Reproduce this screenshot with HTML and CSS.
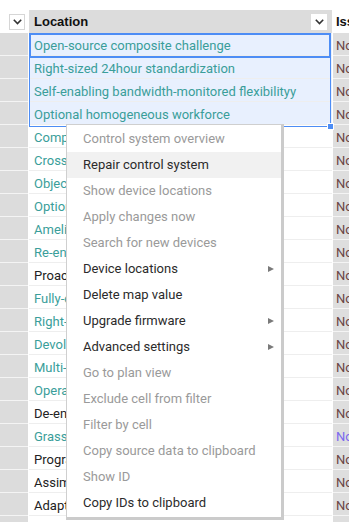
FILE: index.html
```html
<html>
<head>
<link rel="stylesheet" href="styles.css">
</head>
<body>
<div class="sheet">
    <!-- header row -->
    <div class="row head">
        <div class="rowhead">
            <span class="drop"><svg width="9" height="6" viewBox="0 0 9 6"><polyline points="0.8,0.8 4.5,4.6 8.2,0.8" fill="none" stroke="#333" stroke-width="1.6"/></svg></span>
        </div>
        <div class="cell loc">Location
            <span class="drop flat"><svg width="9" height="6" viewBox="0 0 9 6"><polyline points="0.8,0.8 4.5,4.6 8.2,0.8" fill="none" stroke="#333" stroke-width="1.6"/></svg></span>
        </div>
        <div class="cell iss">Issues</div>
    </div>

    <div class="row sel"><div class="rowhead"></div><div class="cell loc teal">Open-source composite challenge</div><div class="cell iss">No</div></div>
    <div class="row sel"><div class="rowhead"></div><div class="cell loc teal">Right-sized 24hour standardization</div><div class="cell iss">No</div></div>
    <div class="row sel"><div class="rowhead"></div><div class="cell loc teal">Self-enabling bandwidth-monitored flexibilityy</div><div class="cell iss">No</div></div>
    <div class="row sel"><div class="rowhead"></div><div class="cell loc teal">Optional homogeneous workforce</div><div class="cell iss">No</div></div>
    <div class="row"><div class="rowhead"></div><div class="cell loc teal">Compatible stable hierarchy</div><div class="cell iss">No</div></div>
    <div class="row"><div class="rowhead"></div><div class="cell loc teal">Cross-platform systemic model</div><div class="cell iss">No</div></div>
    <div class="row"><div class="rowhead"></div><div class="cell loc teal">Object-based local groupware</div><div class="cell iss">No</div></div>
    <div class="row"><div class="rowhead"></div><div class="cell loc teal">Optional zero defect matrix</div><div class="cell iss">No</div></div>
    <div class="row"><div class="rowhead"></div><div class="cell loc teal">Ameliorated fresh-thinking hub</div><div class="cell iss">No</div></div>
    <div class="row"><div class="rowhead"></div><div class="cell loc teal">Re-engineered radical access</div><div class="cell iss">No</div></div>
    <div class="row"><div class="rowhead"></div><div class="cell loc">Proactive asynchronous circuit</div><div class="cell iss">No</div></div>
    <div class="row"><div class="rowhead"></div><div class="cell loc teal">Fully-configurable web-enabled core</div><div class="cell iss">No</div></div>
    <div class="row"><div class="rowhead"></div><div class="cell loc teal">Right-sized mobile adapter</div><div class="cell iss">No</div></div>
    <div class="row"><div class="rowhead"></div><div class="cell loc teal">Devolved neutral database</div><div class="cell iss">No</div></div>
    <div class="row"><div class="rowhead"></div><div class="cell loc teal">Multi-tiered intangible capacity</div><div class="cell iss">No</div></div>
    <div class="row"><div class="rowhead"></div><div class="cell loc teal">Operative optimal alliance</div><div class="cell iss">No</div></div>
    <div class="row"><div class="rowhead"></div><div class="cell loc">De-engineered tertiary interface</div><div class="cell iss">No</div></div>
    <div class="row"><div class="rowhead"></div><div class="cell loc teal">Grass-roots bifurcated project</div><div class="cell iss purple">No</div></div>
    <div class="row"><div class="rowhead"></div><div class="cell loc">Programmable logistical protocol</div><div class="cell iss">No</div></div>
    <div class="row"><div class="rowhead"></div><div class="cell loc">Assimilated modular paradigm</div><div class="cell iss">No</div></div>
    <div class="row"><div class="rowhead"></div><div class="cell loc">Adaptive discrete application</div><div class="cell iss">No</div></div>
    <div class="row"><div class="rowhead"></div><div class="cell loc"></div><div class="cell iss"></div></div>

    <!-- selected range -->
    <div class="range"><div class="active"></div><span class="handle"></span></div>

    <!-- context menu -->
    <ul class="menu">
        <li class="off">Control system overview</li>
        <li class="hover">Repair control system</li>
        <li class="off">Show device locations</li>
        <li class="off">Apply changes now</li>
        <li class="off">Search for new devices</li>
        <li class="sub">Device locations</li>
        <li>Delete map value</li>
        <li class="sub">Upgrade firmware</li>
        <li class="sub">Advanced settings</li>
        <li class="off">Go to plan view</li>
        <li class="off">Exclude cell from filter</li>
        <li class="off">Filter by cell</li>
        <li class="off">Copy source data to clipboard</li>
        <li class="off">Show ID</li>
        <li>Copy IDs to clipboard</li>
    </ul>
</div>
</body>
</html>
```

FILE: styles.css
```css
* {
    margin: 0;
    padding: 0;
    box-sizing: border-box;
}

html, body {
    background: white;
    overflow: hidden;
}

.sheet {
    position: relative;
    padding-top: 10px;
    width: 349px;
    font: 13px Roboto, "Liberation Sans", sans-serif;
}

.row {
    display: flex;
    height: 23px;
}

.rowhead {
    width: 28px;
    flex: none;
    background: #dcdcdc;
    border-bottom: 1px solid #f4f4f4;
    margin-right: 1px;
}

.cell {
    height: 23px;
    line-height: 21px;
    padding: 2px 0 0 5px;
    white-space: nowrap;
    overflow: hidden;
    border-bottom: 1px solid #eeeeee;
}

.cell.loc {
    width: 303px;
    flex: none;
    color: #222;
    margin-right: 1px;
}

.cell.iss {
    flex: 1;
    padding-left: 3px;
    background: #dedede;
    color: #6b4545;
    border-bottom-color: #f4f4f4;
}

.teal { color: #3a9e9a !important; }
.purple { color: #7b68ee !important; }

.row.sel .cell.loc { background: #e8f0fe; }

/* header */
.head .rowhead {
    background: white;
    border: none;
    position: relative;
}
.head .cell {
    font: bold 13px "Liberation Sans", Arial, sans-serif;
    color: #111;
    border: none;
    padding-top: 0;
    line-height: 23px;
}
.head .cell.loc {
    background: #dcdcdc;
    position: relative;
}
.head .cell.iss { background: white; }

.drop {
    position: absolute;
    top: 4px;
    left: 9px;
    width: 16px;
    height: 16px;
    background: white;
    border: 1px solid #d6d6d6;
    display: flex;
    align-items: center;
    justify-content: center;
}
.drop.flat {
    left: auto;
    right: 5px;
    border-color: white;
}

/* selection */
.range {
    position: absolute;
    left: 29px;
    top: 33px;
    width: 302px;
    height: 94px;
    border: 1px solid #4d8df5;
}
.range .active {
    position: absolute;
    left: -1px;
    top: -1px;
    right: -1px;
    height: 25px;
    border: 2px solid #4d8df5;
}
.range .handle {
    position: absolute;
    right: -4px;
    bottom: -4px;
    width: 7px;
    height: 7px;
    background: #4d8df5;
    border: 1px solid white;
}

/* context menu */
.menu {
    position: absolute;
    left: 66px;
    top: 124px;
    width: 218px;
    list-style: none;
    background: white;
    border: 1px solid #cfcfcf;
    border-right: 3px solid #cbcbcb;
    border-bottom: 3px solid #cbcbcb;
    padding: 1px 0 1px;
}
.menu li {
    height: 26px;
    line-height: 26px;
    padding-left: 16px;
    color: #2b2b2b;
    position: relative;
}
.menu li.off { color: #9a9a9a; }
.menu li.hover { background: #f1f1f1; }
.menu li.sub::after {
    content: "";
    position: absolute;
    right: 7px;
    top: 10px;
    border-left: 6px solid #7a7a7a;
    border-top: 3.5px solid transparent;
    border-bottom: 3.5px solid transparent;
}
```
